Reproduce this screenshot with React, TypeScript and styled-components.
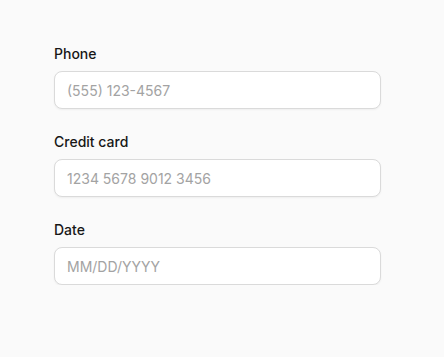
import React from "react";
import styled, { createGlobalStyle } from "styled-components";

const Global = createGlobalStyle`
  html, body { margin: 0; padding: 0; background: #fafafa; }
  body { font-family: Inter, "Noto Sans", sans-serif; -webkit-font-smoothing: antialiased; }
  * { box-sizing: border-box; }
`;

const Page = styled.div`
  padding: 44px 0 0 54px;
  display: flex;
  flex-direction: column;
  gap: 23px;
  width: 381px;
`;

const Field = styled.div`
  display: flex;
  flex-direction: column;
  gap: 7px;
`;

const Label = styled.label`
  font-size: 14px;
  line-height: 20px;
  font-weight: 500;
  color: #171717;
`;

const Input = styled.input`
  width: 327px;
  height: 38px;
  padding: 0 12px;
  border: 1px solid #dadada;
  border-radius: 8px;
  background: #ffffff;
  box-shadow: 0 1px 2px rgba(0, 0, 0, 0.05);
  font-family: Inter, "Noto Sans", sans-serif;
  font-size: 14px;
  color: #171717;
  outline: none;
  &::placeholder { color: #a3a3a3; }
`;

const fields = [
  { id: "phone", label: "Phone", placeholder: "(555) 123-4567" },
  { id: "card", label: "Credit card", placeholder: "1234 5678 9012 3456" },
  { id: "date", label: "Date", placeholder: "MM/DD/YYYY" },
];

export default function App() {
  return (
    <>
      <Global />
      <Page>
        {fields.map((f) => (
          <Field key={f.id}>
            <Label htmlFor={f.id}>{f.label}</Label>
            <Input id={f.id} placeholder={f.placeholder} />
          </Field>
        ))}
      </Page>
    </>
  );
}
